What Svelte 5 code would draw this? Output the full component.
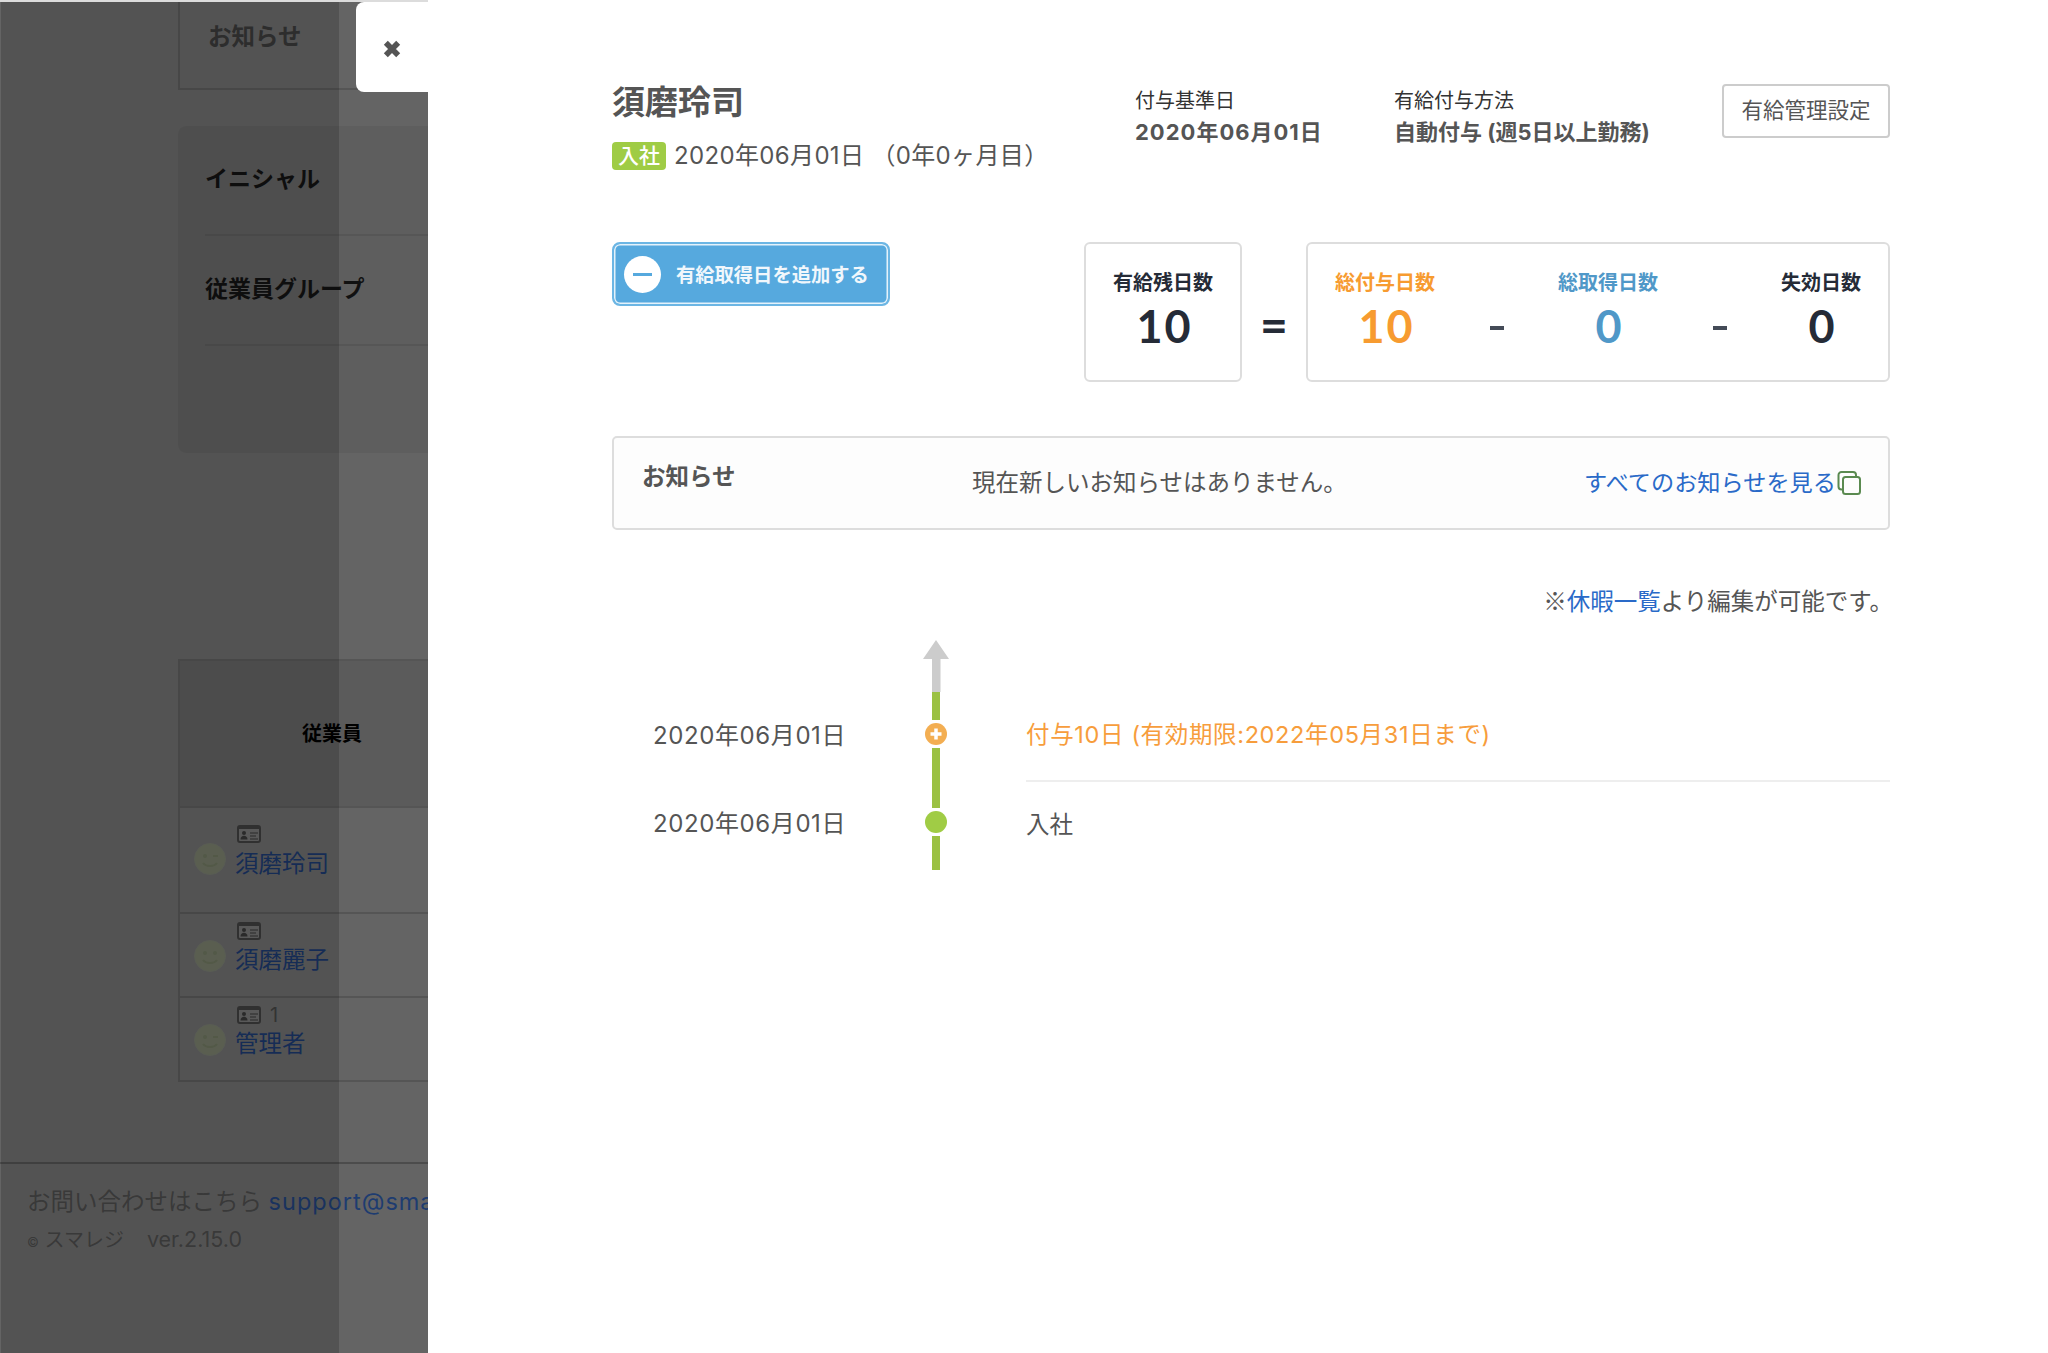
<script>
	const employees = [
		{ name: '須磨玲司', code: '', tall: true, wink: true },
		{ name: '須磨麗子', code: '', tall: false, wink: false },
		{ name: '管理者', code: '1', tall: false, wink: true }
	];

	const stats = [
		{ label: '総付与日数', value: 10, tone: 'orange' },
		{ label: '総取得日数', value: 0, tone: 'blue' },
		{ label: '失効日数', value: 0, tone: '' }
	];
</script>

<div class="page">
	<div class="behind">
		<div class="card-top"><span>お知らせ</span></div>

		<div class="card-form">
			<div class="form-row">イニシャル</div>
			<div class="form-row">従業員グループ</div>
		</div>

		<div class="table">
			<div class="table-head"><span>従業員</span></div>
			{#each employees as emp}
				<div class="table-row" class:tall={emp.tall}>
					<svg class="avatar" viewBox="0 0 32 32">
						<circle cx="16" cy="16" r="15.5" fill="#6c7160" stroke="#6a6e64" />
						<circle cx="11" cy="13" r="2" fill="#636a55" />
						{#if emp.wink}
							<path d="M19 13h5" stroke="#636a55" stroke-width="2" fill="none" />
						{:else}
							<circle cx="21" cy="13" r="2" fill="#636a55" />
						{/if}
						<path d="M9 20c3 4 11 4 14 0" stroke="#636a55" stroke-width="2" fill="none" />
					</svg>
					<div class="emp">
						<div class="emp-meta">
							<svg class="idcard" viewBox="0 0 24 18">
								<rect x="1" y="1" width="22" height="16" rx="2" fill="#6a6a6a" stroke="#3a3a3a" stroke-width="2" />
								<rect x="1" y="1" width="22" height="3" fill="#3a3a3a" />
								<circle cx="7" cy="8" r="2" fill="#333" />
								<path d="M3.500 14.500c0-5 7-5 7 0z" fill="#333" />
								<path d="M13 8h8M13 11h6M13 14h8" stroke="#333" stroke-width="1.200" />
							</svg>
							{#if emp.code}<span>{emp.code}</span>{/if}
						</div>
						<a href="#emp" class="emp-name">{emp.name}</a>
					</div>
				</div>
			{/each}
		</div>

		<footer>
			<div class="contact">お問い合わせはこちら <a href="#mail">support@smaregi.jp</a></div>
			<div class="copy"><small>©</small> スマレジ<span>ver.2.15.0</span></div>
		</footer>
	</div>

	<main class="panel">
		<button class="close" aria-label="閉じる">
			<svg viewBox="0 0 16 16" width="18" height="18">
				<path d="M2.500 2.500l11 11M13.500 2.500l-11 11" stroke="#555" stroke-width="5" />
			</svg>
		</button>

		<header>
			<div class="who">
				<h1>須磨玲司</h1>
				<div class="joined"><span class="tag">入社</span><span class="since">2020年06月01日 （0年0ヶ月目）</span></div>
			</div>
			<div class="info base">
				<div>付与基準日</div>
				<strong>2020年06月01日</strong>
			</div>
			<div class="info method">
				<div>有給付与方法</div>
				<strong>自動付与 (週5日以上勤務)</strong>
			</div>
			<button class="settings">有給管理設定</button>
		</header>

		<section class="summary">
			<button class="add">
				<span class="minus"></span>
				有給取得日を追加する
			</button>
			<div class="box remain">
				<div class="stat">
					<div class="label">有給残日数</div>
					<div class="num">10</div>
				</div>
			</div>
			<div class="equals">=</div>
			<div class="box totals">
				{#each stats as s, i}
					{#if i > 0}<div class="dash"></div>{/if}
					<div class="stat {s.tone}">
						<div class="label">{s.label}</div>
						<div class="num">{s.value}</div>
					</div>
				{/each}
			</div>
		</section>

		<section class="notice">
			<strong>お知らせ</strong>
			<p>現在新しいお知らせはありません。</p>
			<a href="#all">すべてのお知らせを見る<svg viewBox="0 0 24 24" width="24" height="24">
					<path d="M5 18.500h-.5a3 3 0 0 1-3-3V4a3 3 0 0 1 3-3H16a3 3 0 0 1 3 3v1" fill="none" stroke="#5a8a50" stroke-width="2" />
					<rect x="6" y="6" width="17" height="17" rx="2.500" fill="none" stroke="#5a8a50" stroke-width="2" />
				</svg></a>
		</section>

		<p class="edit-note">※<a href="#list">休暇一覧</a>より編集が可能です。</p>

		<section class="timeline">
			<svg class="arrow" viewBox="0 0 26 52" width="26" height="52">
				<path d="M13 0L26 19H17.500V52H9V19H0z" fill="#ccc" />
			</svg>

			<div class="row first">
				<div class="date">2020年06月01日</div>
				<div class="axis">
					<i class="seg seg-a"></i>
					<svg class="dot" viewBox="0 0 22 22">
						<circle cx="11" cy="11" r="11" fill="#f3ae52" />
						<path d="M11 5.500v11M5.500 11h11" stroke="#fff" stroke-width="3.500" />
					</svg>
					<i class="seg grow"></i>
				</div>
				<div class="event grant">付与10日 (有効期限:2022年05月31日まで)</div>
			</div>

			<div class="row second">
				<div class="date">2020年06月01日</div>
				<div class="axis">
					<i class="seg seg-b"></i>
					<svg class="dot" viewBox="0 0 22 22"><circle cx="11" cy="11" r="11" fill="#a0cc45" /></svg>
					<i class="seg grow"></i>
				</div>
				<div class="event">入社</div>
			</div>
		</section>
	</main>
</div>

<style>
	:global(body) {
		margin: 0;
		background: #fff;
	}

	.page {
		display: flex;
		height: 1353px;
		overflow: hidden;
		font-family: Inter, 'Noto Sans CJK JP', sans-serif;
		color: #555;
	}

	/* dimmed page behind the drawer */
	.behind {
		position: relative;
		flex: 0 0 428px;
		box-sizing: border-box;
		height: 1353px;
		padding-left: 178px;
		overflow: hidden;
		background: #646464;
		border-top: 2px solid #dcdcdc;
		white-space: nowrap;
	}

	.behind::after {
		content: '';
		position: absolute;
		left: 1px;
		top: 0;
		bottom: 0;
		width: 338px;
		background: rgba(0, 0, 0, 0.16);
	}

	.card-top {
		box-sizing: border-box;
		width: 400px;
		height: 88px;
		padding: 20px 0 0 28px;
		border: 2px solid #555;
		border-top: 0;
		font-size: 23.500px;
		font-weight: 700;
		line-height: 30px;
		color: #363636;
	}

	.card-form {
		box-sizing: border-box;
		width: 400px;
		height: 327px;
		margin-top: 36px;
		padding-left: 27px;
		background: rgba(0, 0, 0, 0.05);
		border-radius: 8px 0 0 8px;
		color: #111;
		font-size: 23px;
		font-weight: 700;
	}

	.form-row {
		height: 108px;
		line-height: 106px;
		border-bottom: 2px solid #565656;
	}

	.table {
		box-sizing: border-box;
		width: 400px;
		margin-top: 206px;
		border: 2px solid #555;
		border-right: 0;
	}

	.table-head {
		height: 145px;
		padding-left: 122px;
		line-height: 147px;
		background: rgba(0, 0, 0, 0.09);
		font-size: 20px;
		font-weight: 700;
		color: #000;
	}

	.table-row {
		display: flex;
		align-items: flex-start;
		box-sizing: border-box;
		height: 84px;
		padding: 8px 0 0 14px;
		border-top: 2px solid #555;
	}

	.table-row.tall {
		height: 106px;
		padding-top: 17px;
	}

	.avatar {
		width: 32px;
		height: 32px;
		margin-top: 18px;
	}

	.emp {
		margin-left: 9px;
	}

	.emp-meta {
		display: flex;
		align-items: center;
		gap: 9px;
		height: 18px;
		padding-left: 2px;
		font-size: 20px;
		color: #3d3d3d;
	}

	.idcard {
		width: 24px;
		height: 18px;
	}

	.emp-name {
		display: block;
		margin-top: 3px;
		font-size: 23.500px;
		line-height: 34px;
		color: #1a3566;
		text-decoration: none;
	}

	.tall .emp-name {
		margin-top: 4px;
	}

	footer {
		width: 500px;
		margin: 80px 0 0 -178px;
		padding: 22px 0 0 27px;
		border-top: 2px solid #4c4c4c;
	}

	.contact {
		font-size: 23.500px;
		line-height: 32px;
		color: #444;
	}

	.contact a {
		color: #1e3c70;
		text-decoration: none;
		letter-spacing: 1px;
	}

	.copy {
		margin-top: 8px;
		font-size: 20px;
		line-height: 26px;
		color: #444;
	}

	.copy small {
		font-size: 13px;
	}

	.copy span {
		margin-left: 23px;
		font-size: 21.500px;
	}

	/* drawer */
	.panel {
		position: relative;
		flex: 1;
		box-sizing: border-box;
		padding: 0 158px 0 184px;
		background: #fff;
	}

	.close {
		position: absolute;
		left: -72px;
		top: 2px;
		width: 72px;
		height: 90px;
		padding: 3px 0 0;
		display: flex;
		align-items: center;
		justify-content: center;
		background: #fff;
		border: 0;
		border-radius: 8px 0 0 8px;
	}

	header {
		display: flex;
		align-items: flex-start;
		padding-top: 80px;
		margin-bottom: 72px;
	}

	.who {
		flex: 0 0 523px;
	}

	h1 {
		margin: 0;
		font-size: 33px;
		font-weight: 700;
		line-height: 44px;
		color: #555;
	}

	.joined {
		display: flex;
		align-items: center;
		margin-top: 18px;
		height: 28px;
		font-size: 24px;
		white-space: pre;
	}

	.since {
		margin-top: -6px;
		letter-spacing: 0.350px;
	}

	.tag {
		box-sizing: border-box;
		width: 54px;
		height: 28px;
		margin-right: 8px;
		text-align: center;
		line-height: 28px;
		font-size: 21px;
		font-weight: 500;
		color: #fff;
		background: #9fcc45;
		border-radius: 4px;
	}

	.info {
		margin-top: 7px;
		font-size: 20px;
		line-height: 28px;
		color: #333;
	}

	.info strong {
		display: block;
		margin-top: 1px;
		font-size: 22px;
		line-height: 32px;
		color: #555;
	}

	.base {
		flex: 0 0 259px;
	}

	.base strong {
		letter-spacing: 1px;
	}

	.method {
		flex: 1;
	}

	.settings {
		box-sizing: border-box;
		width: 168px;
		height: 54px;
		margin-top: 4px;
		padding: 0 0 5px;
		background: #fff;
		border: 2px solid #ccc;
		border-radius: 4px;
		font: inherit;
		font-size: 21.500px;
		color: #555;
	}

	.summary {
		display: flex;
		align-items: flex-start;
	}

	.add {
		box-sizing: border-box;
		display: flex;
		align-items: center;
		gap: 15px;
		width: 278px;
		height: 64px;
		margin-right: auto;
		padding: 0 0 0 10px;
		background: #56a9de;
		border: 2px solid #6cb6e4;
		box-shadow: inset 0 0 0 1.500px #e4f2fb;
		border-radius: 8px;
		font: inherit;
		font-size: 19.300px;
		font-weight: 700;
		color: #f0f7fc;
	}

	.minus {
		position: relative;
		flex: none;
		width: 37px;
		height: 37px;
		border-radius: 50%;
		background: #fff;
	}

	.minus::after {
		content: '';
		position: absolute;
		left: 9px;
		right: 9px;
		top: 17px;
		height: 3px;
		background: #56a9de;
	}

	.box {
		box-sizing: border-box;
		display: flex;
		align-items: flex-start;
		height: 140px;
		padding-top: 25px;
		border: 2px solid #ddd;
		border-radius: 6px;
	}

	.remain {
		width: 158px;
		justify-content: center;
	}

	.equals {
		width: 64px;
		height: 140px;
		text-align: center;
		line-height: 166px;
		font-family: Lato, sans-serif;
		font-size: 48px;
		font-weight: 700;
		color: #252b37;
	}

	.totals {
		width: 584px;
		padding-left: 27px;
		padding-right: 27px;
		justify-content: space-between;
	}

	.stat {
		text-align: center;
		color: #252b37;
	}

	.stat.orange {
		color: #f79b30;
	}

	.stat.blue {
		color: #5098c8;
	}

	.label {
		font-size: 20px;
		font-weight: 700;
		line-height: 28px;
	}

	.num {
		margin-top: 3px;
		padding-left: 3px;
		font-family: Lato, sans-serif;
		font-size: 45px;
		font-weight: 700;
		letter-spacing: 2px;
		line-height: 52px;
	}

	.dash {
		width: 14px;
		height: 4px;
		margin-top: 57px;
		background: #444b57;
	}

	.notice {
		box-sizing: border-box;
		display: flex;
		align-items: flex-start;
		height: 94px;
		margin-top: 54px;
		padding: 23px 27px 0 28px;
		background: #fdfdfd;
		border: 2px solid #ddd;
		border-radius: 5px;
		font-size: 23.500px;
		line-height: 32px;
	}

	.notice strong {
		flex: 0 0 330px;
	}

	.notice p {
		flex: 1;
		margin: 6px 0 0;
	}

	.notice a {
		display: flex;
		align-items: center;
		margin-top: 6px;
		font-size: 23.200px;
		color: #2a6ac8;
		text-decoration: none;
	}

	.notice svg {
		margin-left: 1px;
	}

	.edit-note {
		margin: 54px -3px 24px 0;
		text-align: right;
		font-family: 'Noto Sans CJK JP', sans-serif;
		font-size: 23.500px;
		line-height: 32px;
	}

	.edit-note a {
		color: #2a6ac8;
		text-decoration: none;
	}

	.arrow {
		display: block;
		margin-left: 311px;
	}

	.row {
		display: grid;
		grid-template-columns: 311px 26px 1fr;
		height: 89px;
	}

	.date {
		padding: 28px 0 0 41px;
		font-size: 24px;
		line-height: 32px;
		letter-spacing: 0.600px;
	}

	.second .date {
		padding-top: 27px;
	}

	.axis {
		display: flex;
		flex-direction: column;
		align-items: center;
	}

	.seg {
		width: 8px;
		background: #9bc143;
	}

	.seg-a {
		height: 28px;
	}

	.seg-b {
		height: 27px;
	}

	.grow {
		flex: 1;
	}

	.dot {
		flex: none;
		width: 22px;
		height: 22px;
		margin: 3px 0;
	}

	.event {
		margin-left: 77px;
		padding-top: 28px;
		font-size: 23.500px;
		line-height: 32px;
	}

	.first .event {
		border-bottom: 2px solid #eee;
		height: 61px;
		padding-top: 27px;
	}

	.grant {
		color: #f79d3c;
		letter-spacing: 0.650px;
	}
</style>
